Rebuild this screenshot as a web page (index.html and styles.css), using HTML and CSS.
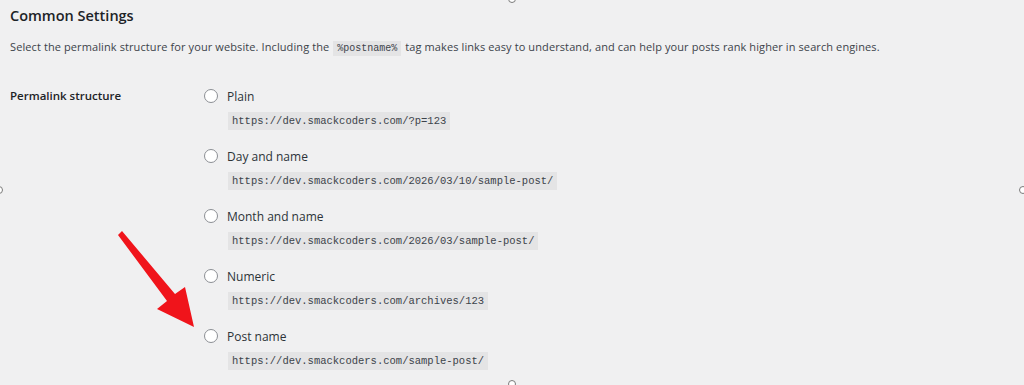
FILE: index.html
```html
<!DOCTYPE html>
<html>
<head>
<meta charset="utf-8">
<link rel="stylesheet" href="styles.css">
</head>
<body>
<div class="page">
  <h2 class="title">Common Settings</h2>
  <p class="desc">Select the permalink structure for your website. Including the <code class="tag">%postname%</code> tag makes links easy to understand, and can help your posts rank higher in search engines.</p>
  <div class="row">
    <div class="th">Permalink structure</div>
    <div class="options">
      <div class="opt"><label class="lbl"><span class="radio"></span>Plain</label><code class="url">https://dev.smackcoders.com/?p=123</code></div>
      <div class="opt"><label class="lbl"><span class="radio"></span>Day and name</label><code class="url">https://dev.smackcoders.com/2026/03/10/sample-post/</code></div>
      <div class="opt"><label class="lbl"><span class="radio"></span>Month and name</label><code class="url">https://dev.smackcoders.com/2026/03/sample-post/</code></div>
      <div class="opt"><label class="lbl"><span class="radio"></span>Numeric</label><code class="url">https://dev.smackcoders.com/archives/123</code></div>
      <div class="opt"><label class="lbl"><span class="radio"></span>Post name</label><code class="url">https://dev.smackcoders.com/sample-post/</code></div>
    </div>
  </div>
</div>
<svg class="arrow" width="1024" height="385" viewBox="0 0 1024 385">
  <polygon points="118,235 122,231 175,294 185,287 194,327 157,309 167,301" fill="#f0141b"/>
</svg>
<span class="handle h-top"></span>
<span class="handle h-left"></span>
<span class="handle h-right"></span>
<span class="handle h-bottom"></span>
</body>
</html>
```
FILE: styles.css
```css
html, body {
  margin: 0;
  padding: 0;
  background: #f0f0f1;
}
body {
  width: 1024px;
  height: 385px;
  overflow: hidden;
  position: relative;
  font-family: "Open Sans", "Noto Sans", sans-serif;
  color: #1d2327;
}
.page {
  padding: 6px 0 0 10px;
}
.title {
  margin: 0;
  font-size: 14.5px;
  font-weight: 600;
  line-height: 20px;
  color: #1d2327;
}
.desc {
  margin: 13px 0 0 0;
  font-size: 11px;
  line-height: 16px;
  letter-spacing: 0.1px;
  color: #3c434a;
}
.tag {
  font-family: "Liberation Mono", monospace;
  font-size: 10px;
  letter-spacing: 0;
  background: #e4e4e5;
  padding: 2px 4px;
  margin: 0 1px;
  color: #3c434a;
}
.row {
  margin-top: 29px;
  display: grid;
  grid-template-columns: 194px 1fr;
}
.th {
  font-size: 11.5px;
  font-weight: 600;
  line-height: 20px;
  color: #1d2327;
}
.options {
  display: flex;
  flex-direction: column;
}
.opt {
  display: flex;
  flex-direction: column;
  align-items: flex-start;
  height: 60px;
}
.lbl {
  display: flex;
  align-items: center;
  gap: 9px;
  height: 20px;
  font-size: 12px;
  color: #2c3338;
}
.radio {
  width: 12px;
  height: 12px;
  border: 1px solid #8c8f94;
  border-radius: 50%;
  background: #fff;
}
.url {
  margin: 6px 0 0 24px;
  height: 18px;
  line-height: 18px;
  padding: 0 4px;
  background: #e4e4e5;
  font-family: "Liberation Mono", monospace;
  font-size: 10.5px;
  color: #3c434a;
}
.arrow {
  position: absolute;
  left: 0;
  top: 0;
  pointer-events: none;
}
.handle {
  position: absolute;
  width: 6px;
  height: 6px;
  border: 1px solid #7a7a7a;
  border-radius: 50%;
  background: #fff;
}
.h-top { left: 508px; top: -5px; }
.h-bottom { left: 508px; top: 380px; }
.h-left { left: -5px; top: 186px; }
.h-right { left: 1019px; top: 186px; }
```
